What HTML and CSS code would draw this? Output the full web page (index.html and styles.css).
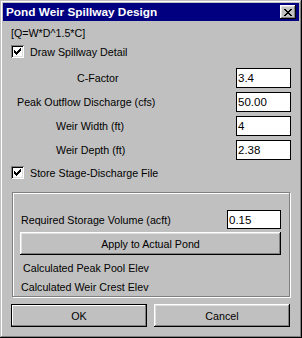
FILE: index.html
```html
<!DOCTYPE html>
<html>
<head>
    <title>Pond Weir Spillway Design</title>
    <link rel="stylesheet" href="styles.css">
</head>
<body>
    <div class="dialog">
        <div class="titlebar">
            <span class="title">Pond Weir Spillway Design</span>
            <span class="close">
                <svg width="8" height="7" viewBox="0 0 8 7" shape-rendering="crispEdges">
                    <path d="M0 0h2v1h-2zM6 0h2v1h-2zM1 1h2v1h-2zM5 1h2v1h-2zM2 2h4v1h-4zM3 3h2v1h-2zM2 4h4v1h-4zM1 5h2v1h-2zM5 5h2v1h-2zM0 6h2v1h-2zM6 6h2v1h-2z" fill="#000"/>
                </svg>
            </span>
        </div>

        <div class="content">
            <div class="formula">[Q=W*D^1.5*C]</div>

            <div class="check-row first">
                <span class="checkbox">
                    <svg width="7" height="7" viewBox="0 0 7 7" shape-rendering="crispEdges">
                        <path d="M6 0h1v1h-1zM5 1h2v1h-2zM0 2h1v1h-1zM4 2h3v1h-3zM0 3h2v1h-2zM3 3h3v1h-3zM0 4h5v1h-5zM1 5h3v1h-3zM2 6h1v1h-1z" fill="#000"/>
                    </svg>
                </span>
                <span>Draw Spillway Detail</span>
            </div>

            <!-- campos de entrada -->
            <div class="fields">
                <div class="field-row">
                    <span class="label lbl-c">C-Factor</span>
                    <input class="text" type="text" value="3.4">
                </div>
                <div class="field-row">
                    <span class="label lbl-peak">Peak Outflow Discharge (cfs)</span>
                    <input class="text" type="text" value="50.00">
                </div>
                <div class="field-row">
                    <span class="label lbl-weir">Weir Width (ft)</span>
                    <input class="text" type="text" value="4">
                </div>
                <div class="field-row">
                    <span class="label lbl-weir">Weir Depth (ft)</span>
                    <input class="text" type="text" value="2.38">
                </div>
            </div>

            <div class="check-row second">
                <span class="checkbox">
                    <svg width="7" height="7" viewBox="0 0 7 7" shape-rendering="crispEdges">
                        <path d="M6 0h1v1h-1zM5 1h2v1h-2zM0 2h1v1h-1zM4 2h3v1h-3zM0 3h2v1h-2zM3 3h3v1h-3zM0 4h5v1h-5zM1 5h3v1h-3zM2 6h1v1h-1z" fill="#000"/>
                    </svg>
                </span>
                <span>Store Stage-Discharge File</span>
            </div>

            <div class="group">
                <div class="group-row">
                    <span class="label">Required Storage Volume (acft)</span>
                    <input class="text small" type="text" value="0.15">
                </div>
                <button class="btn apply">Apply to Actual Pond</button>
                <div class="calc calc-peak">Calculated Peak Pool Elev</div>
                <div class="calc calc-crest">Calculated Weir Crest Elev</div>
            </div>

            <div class="buttons">
                <button class="btn default">OK</button>
                <button class="btn">Cancel</button>
            </div>
        </div>
    </div>
</body>
</html>
```

FILE: styles.css
```css
/* Cuadro de dialogo estilo Windows 95 */
body {
    margin: 0;
    padding: 0;
    background: #c0c0c0;
    font-family: "Liberation Sans", Arial, sans-serif;
    font-size: 10.7px;
    color: #000;
}

.dialog {
    width: 302px;
    height: 338px;
    box-sizing: border-box;
    padding: 3px;
    background: #c0c0c0;
    box-shadow: inset -1px -1px #000, inset 1px 1px #c0c0c0,
                inset -2px -2px #808080, inset 2px 2px #fff;
}

.titlebar {
    height: 18px;
    background: #000080;
    display: flex;
    align-items: center;
    padding-left: 3px;
}

.title {
    color: #fff;
    font-weight: bold;
    font-size: 11.8px;
}

.close {
    margin-left: auto;
    margin-right: 3px;
    width: 16px;
    height: 14px;
    box-sizing: border-box;
    background: #c0c0c0;
    box-shadow: inset -1px -1px #000, inset 1px 1px #fff,
                inset -2px -2px #808080, inset 2px 2px #dfdfdf;
    display: flex;
    align-items: center;
    justify-content: center;
}

.content {
    padding: 0 8px;
}

.formula {
    margin-top: 6px;
    line-height: 13px;
}

.check-row {
    display: flex;
    align-items: center;
    height: 13px;
}

.check-row.first {
    margin-top: 5px;
}

.check-row.second {
    margin-top: 6px;
}

.checkbox {
    width: 13px;
    height: 13px;
    box-sizing: border-box;
    background: #fff;
    box-shadow: inset 1px 1px #808080, inset -1px -1px #fff,
                inset 2px 2px #000, inset -2px -2px #dfdfdf;
    display: flex;
    align-items: center;
    justify-content: center;
    margin-right: 6px;
}

.fields {
    margin-top: 10px;
    display: flex;
    flex-direction: column;
    gap: 4px;
}

.field-row {
    display: flex;
    align-items: center;
    height: 20px;
}

.lbl-c {
    margin-left: 66px;
}

.lbl-peak {
    margin-left: 6px;
}

.lbl-weir {
    margin-left: 45px;
}

.text {
    margin-left: auto;
    width: 55px;
    height: 20px;
    box-sizing: border-box;
    border: 1px solid #000;
    padding: 0 1px;
    font: inherit;
    font-size: 11.5px;
    background: #fff;
    outline: none;
}

.text.small {
    width: 54px;
    height: 19px;
}

.group {
    margin: 13px 1px 0 1px;
    height: 105px;
    box-sizing: border-box;
    border: 1px solid #808080;
    box-shadow: inset 1px 1px #fff, 1px 1px #fff;
    padding: 17px 8px 0 7px;
}

.group-row {
    display: flex;
    align-items: center;
    height: 19px;
    padding-left: 1px;
}

.btn {
    font: inherit;
    color: #000;
    background: #c0c0c0;
    border: none;
    height: 23px;
    box-sizing: border-box;
    padding: 0;
    box-shadow: inset -1px -1px #000, inset 1px 1px #fff,
                inset -2px -2px #808080, inset 2px 2px #dfdfdf;
}

.apply {
    display: block;
    width: 100%;
    margin-top: 3px;
}

.calc {
    line-height: 13px;
}

.calc-peak {
    margin-top: 7px;
    padding-left: 3px;
}

.calc-crest {
    margin-top: 6px;
    padding-left: 1px;
}

.buttons {
    margin-top: 7px;
    display: flex;
    gap: 7px;
}

.buttons .btn {
    width: 136px;
}

.btn.default {
    border: 1px solid #000;
    box-shadow: inset -1px -1px #808080, inset 1px 1px #fff;
}
```
